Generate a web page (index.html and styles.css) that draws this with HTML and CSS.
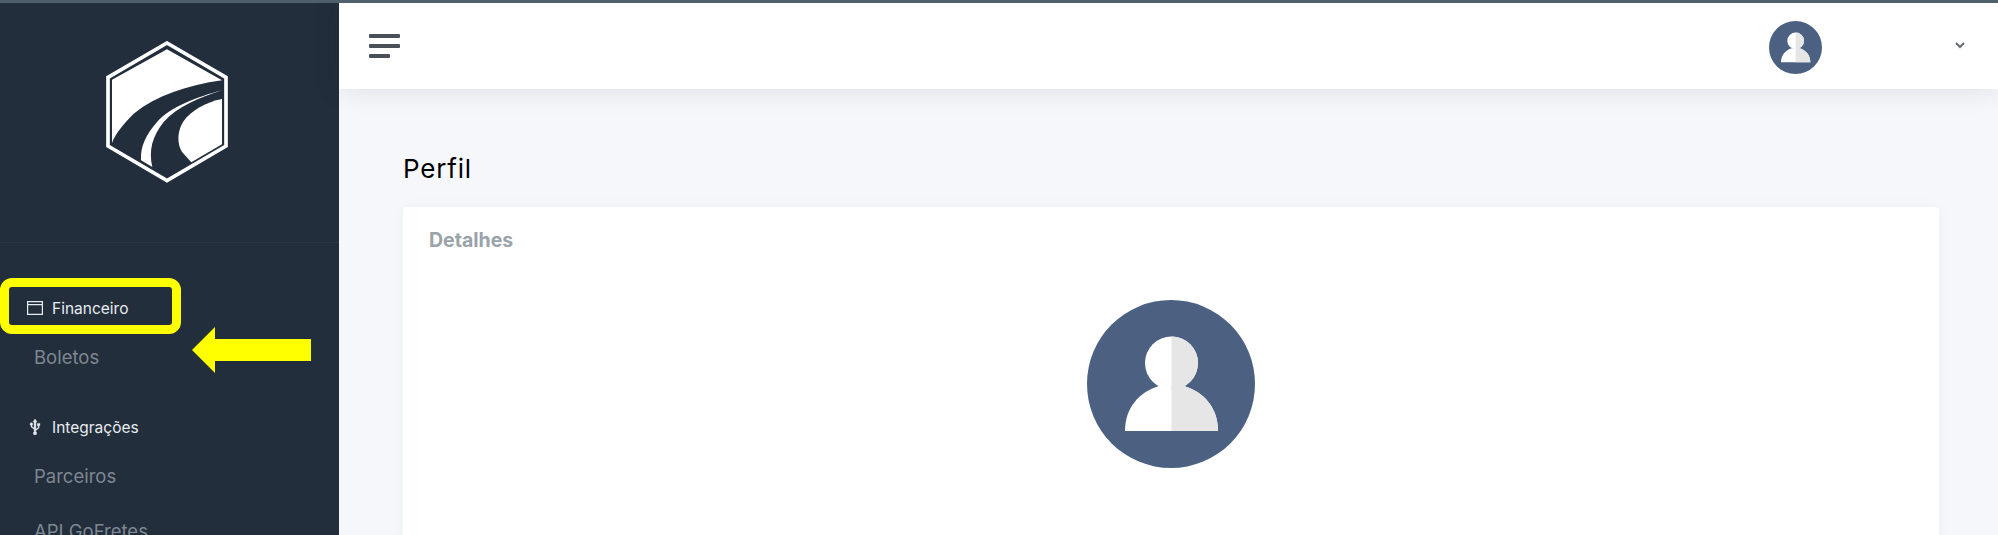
FILE: index.html
```html
<!DOCTYPE html>
<html lang="pt-BR">
<head>
  <meta charset="UTF-8" />
  <title>Perfil</title>
  <link rel="stylesheet" href="styles.css">
</head>
<body>
  <svg class="defs" width="0" height="0">
    <defs>
      <clipPath id="metade"><rect x="84.5" y="0" width="84" height="168"/></clipPath>
      <symbol id="avatar" viewBox="0 0 168 168">
        <circle cx="84" cy="84" r="84" fill="#4c6182"/>
        <g fill="#fff">
          <circle cx="84.5" cy="63" r="26.5"/>
          <path d="M38 131C38 108 52 92 72 86L97 86C117 92 131 108 131 131Z"/>
        </g>
        <g fill="#e6e6e6" clip-path="url(#metade)">
          <circle cx="84.5" cy="63" r="26.5"/>
          <path d="M38 131C38 108 52 92 72 86L97 86C117 92 131 108 131 131Z"/>
        </g>
      </symbol>
    </defs>
  </svg>

  <div class="app">
    <aside class="sidebar">
      <div class="marca">
        <svg class="logo" viewBox="0 0 366 426" width="122" height="142">
          <g transform="translate(-317 -122)" fill="#fff">
            <path d="M500 128L677 231V437L500 541L323 437V231Z" fill="none" stroke="#fff" stroke-width="11"/>
            <path d="M500 147L665 240C560 255 470 285 400 340C370 370 345 400 335 428V238Z"/>
            <path d="M665 270C590 290 510 320 470 365C435 405 420 440 422 480L456 500C445 450 455 410 490 365C530 320 600 290 665 270Z"/>
            <path d="M665 296C620 305 570 330 548 365C530 395 530 430 545 455L573 486L665 432Z"/>
          </g>
        </svg>
      </div>
      <nav class="menu">
        <div class="grupo">
          <div class="grupo-titulo">
            <svg class="grupo-icone" viewBox="0 0 16 14" width="16" height="14">
              <path d="M0.6 0.6H15.4V13.4H0.6ZM0.6 3.6H15.4" fill="none" stroke="#e8ecf0" stroke-width="1.2"/>
            </svg>
            <span>Financeiro</span>
          </div>
          <a class="item" href="#">Boletos</a>
        </div>
        <div class="grupo">
          <div class="grupo-titulo">
            <svg class="grupo-icone" viewBox="0 0 16 16" width="16" height="16">
              <path d="M8 0L10 3H8.9V10.2L11.2 8.4V6.8H10.3V4.4H12.9V6.8H12.1V8.9L8.9 11.4V12.6H7.1V10.2L4 7.9V6.5C3.4 6.3 3 5.8 3 5.2C3 4.4 3.6 3.8 4.4 3.8C5.2 3.8 5.8 4.4 5.8 5.2C5.8 5.8 5.4 6.3 4.9 6.5V7.4L7.1 9.1V3H6ZM8 12.6A1.7 1.7 0 1 1 8 16A1.7 1.7 0 1 1 8 12.6Z" fill="#e8ecf0" stroke="#e8ecf0" stroke-width="0.4"/>
            </svg>
            <span>Integrações</span>
          </div>
          <a class="item" href="#">Parceiros</a>
          <a class="item" href="#">API GoFretes</a>
        </div>
      </nav>
    </aside>

    <div class="conteudo">
      <header class="topo">
        <div class="burger"><span></span><span></span><span class="curta"></span></div>
        <div class="usuario">
          <svg class="avatar-mini"><use href="#avatar"/></svg>
          <svg class="seta" viewBox="0 0 10 7" width="10" height="7">
            <path d="M1 1L5 5L9 1" fill="none" stroke="#6b6f73" stroke-width="2.2"/>
          </svg>
        </div>
      </header>

      <main class="pagina">
        <h1 class="titulo">Perfil</h1>
        <section class="card">
          <h2 class="card-titulo">Detalhes</h2>
          <svg class="avatar-grande"><use href="#avatar"/></svg>
        </section>
      </main>
    </div>
  </div>

  <div class="destaque"></div>
  <svg class="seta-amarela" viewBox="0 0 119 46" width="119" height="46">
    <path d="M0 23L23 0V12H119V34H23V46Z" fill="#ffff00"/>
  </svg>
</body>
</html>
```

FILE: styles.css
```css
* {
  box-sizing: border-box;
}
html,
body {
  margin: 0;
  height: 535px;
  overflow: hidden;
}
body {
  position: relative;
  font-family: Inter, "Liberation Sans", sans-serif;
  background-color: #f5f7fb;
  border-top: 3px solid #4d606c;
}
.defs {
  position: absolute;
}
.app {
  display: flex;
  height: 532px;
}
.sidebar {
  flex: 0 0 339px;
  background-color: #222e3c;
  overflow: hidden;
}
.marca {
  height: 240px;
  padding-top: 38px;
  display: flex;
  justify-content: center;
  align-items: flex-start;
  padding-right: 6px;
  border-bottom: 1px solid #2a3645;
}
.menu {
  padding-top: 50px;
}
.grupo {
  margin-bottom: 28px;
}
.grupo-titulo {
  display: flex;
  align-items: center;
  height: 30px;
  margin-bottom: 6px;
  padding-left: 27px;
  font-size: 15.5px;
  color: #e8ecf0;
}
.grupo-icone {
  margin-right: 9px;
  flex: none;
}
.item {
  display: flex;
  align-items: center;
  height: 55px;
  padding-left: 34px;
  font-size: 18.5px;
  color: #7f8791;
  text-decoration: none;
}
.conteudo {
  flex: 1;
  min-width: 0;
}
.topo {
  position: relative;
  display: flex;
  justify-content: space-between;
  align-items: center;
  height: 86px;
  padding: 0 33px 0 30px;
  background-color: #fff;
  box-shadow: 0 0 28px rgba(33, 37, 41, 0.12);
}
.burger {
  display: flex;
  flex-direction: column;
  gap: 6px;
  width: 31px;
}
.burger span {
  height: 4px;
  border-radius: 1px;
  background-color: #495057;
}
.burger .curta {
  width: 21px;
}
.usuario {
  display: flex;
  align-items: center;
  gap: 133px;
}
.avatar-mini {
  width: 53px;
  height: 53px;
  margin-top: 2px;
}
.seta {
  margin-bottom: 2px;
}
.pagina {
  padding: 64px 59px 0 64px;
}
.titulo {
  margin: 0 0 22px;
  font-size: 26px;
  line-height: 32px;
  font-weight: 400;
  letter-spacing: 0.8px;
  color: #000;
}
.card {
  height: 400px;
  padding: 22px 26px;
  background-color: #fff;
  border-radius: 4px;
  box-shadow: 0 0 14px rgba(33, 37, 41, 0.04);
  text-align: center;
}
.card-titulo {
  margin: 0;
  font-size: 19.5px;
  line-height: 22px;
  font-weight: 700;
  color: #9aa2aa;
  text-align: left;
}
.avatar-grande {
  display: block;
  width: 168px;
  height: 168px;
  margin: 49px auto 0;
}
.destaque {
  position: absolute;
  left: 0;
  top: 275px;
  width: 181px;
  height: 56px;
  border: 9px solid #ffff00;
  border-radius: 12px;
}
.seta-amarela {
  position: absolute;
  left: 192px;
  top: 324px;
}
```
